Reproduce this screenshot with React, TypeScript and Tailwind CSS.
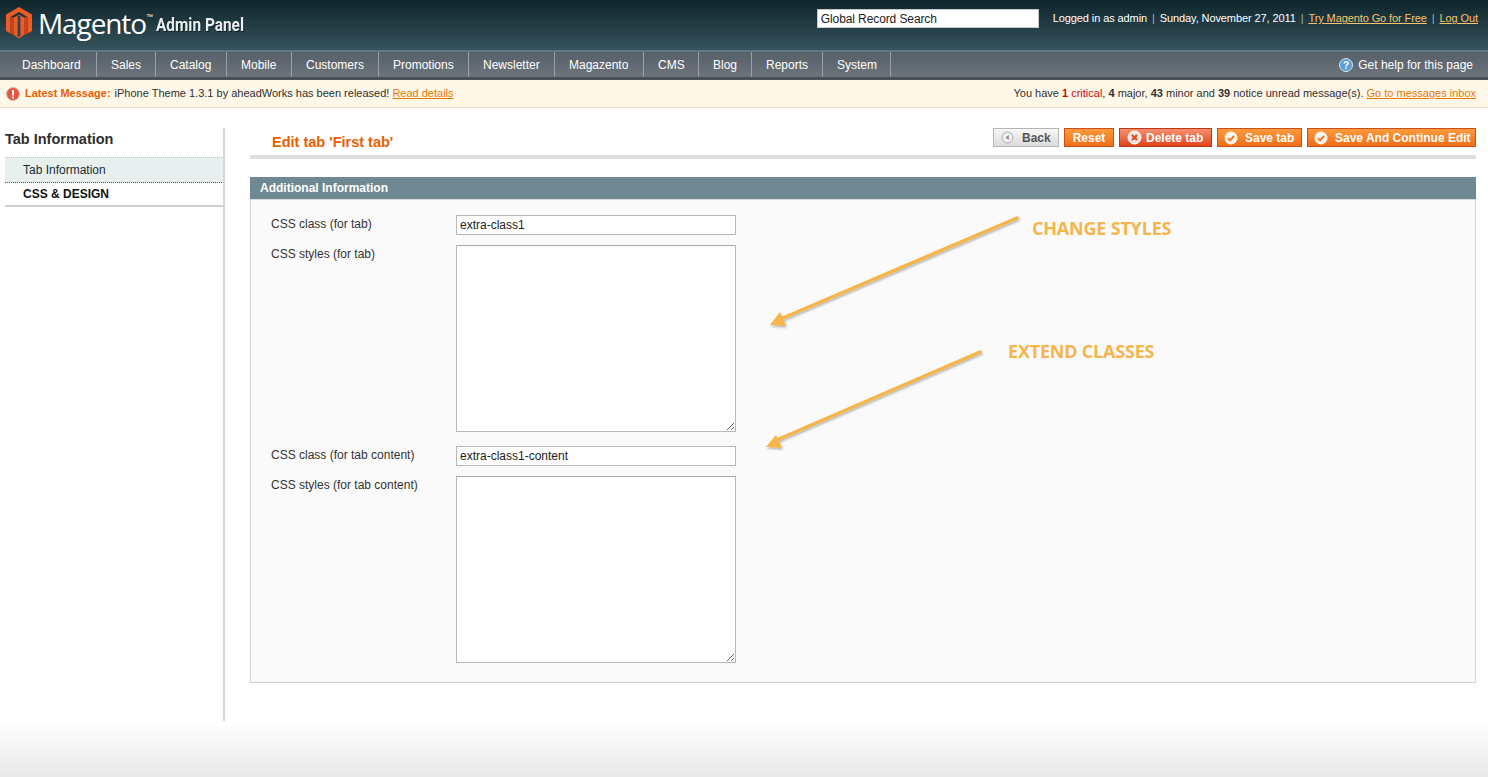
import React from "react";

const navItems: [string, string][] = [
  ["Dashboard", "w-[97px] pl-[22px]"],
  ["Sales", "w-[59px] pl-[14px]"],
  ["Catalog", "w-[71px] pl-[14px]"],
  ["Mobile", "w-[65px] pl-[14px]"],
  ["Customers", "w-[87px] pl-[14px]"],
  ["Promotions", "w-[90px] pl-[14px]"],
  ["Newsletter", "w-[86px] pl-[14px]"],
  ["Magazento", "w-[89px] pl-[14px]"],
  ["CMS", "w-[55px] pl-[14px]"],
  ["Blog", "w-[53px] pl-[14px]"],
  ["Reports", "w-[71px] pl-[14px]"],
  ["System", "w-[68px] pl-[14px]"],
];

function Logo() {
  return (
    <svg width="28" height="32" viewBox="0 0 28 32" className="shrink-0">
      <path d="M14 0 L27 7.5 V24 L22.5 26.5 V10 L14 5 L5.5 10 V26.5 L1 24 V7.5 Z" fill="#ee5b25" />
      <path d="M14 7.5 L19 10.5 V28 L14 31.5 L9 28 V10.5 Z" fill="#ee5b25" />
      <path d="M12.6 9 V29 L14 30 L15.4 29 V9 L14 8.2 Z" fill="#2b4650" />
      <path d="M5.5 10 L9 10.5 V28 L5.5 26.5 Z" fill="#c8441a" />
      <path d="M22.5 10 L19 10.5 V28 L22.5 26.5 Z" fill="#c8441a" />
    </svg>
  );
}

function CheckIcon() {
  return (
    <svg width="14" height="14" viewBox="0 0 14 14" className="shrink-0">
      <circle cx="7" cy="7" r="6.5" fill="#fff" fillOpacity="0.92" />
      <path d="M4 7.2 L6.2 9.4 L10 5" fill="none" stroke="#f27a1f" strokeWidth="2" />
    </svg>
  );
}

function OrangeButton({ children, className }: { children: React.ReactNode; className: string }) {
  return (
    <button className={"h-[19px] flex items-center border border-[#c9501a] bg-gradient-to-b from-[#fb9a3c] to-[#f26d12] text-white font-bold text-[12px] leading-none " + className}>
      {children}
    </button>
  );
}

function Field({ label, value, area }: { label: string; value?: string; area?: boolean }) {
  return (
    <div className="flex items-start">
      <label className="w-[205px] pt-[2px] pl-[20px] text-[12px] leading-[15px] text-[#333]">{label}</label>
      {area ? (
        <textarea readOnly className="w-[280px] h-[187px] block bg-white border border-[#b8b8b8] border-t-[#aaa]" />
      ) : (
        <input readOnly value={value} className="w-[280px] h-[20px] block bg-white border border-[#b8b8b8] px-[3px] text-[12px] text-[#222] outline-none" />
      )}
    </div>
  );
}

export default function App() {
  return (
    <div className="relative h-[777px] w-[1488px] overflow-hidden bg-white font-['Liberation_Sans',Arial,sans-serif] text-[12px] text-[#2f2f2f]">
      {/* Header */}
      <header className="h-[52px] flex items-start bg-gradient-to-b from-[#0f252c] to-[#36545e] border-b-2 border-b-[#5d7a85]">
        <div className="flex items-center pl-[5px] pt-[7px]">
          <Logo />
          <span className="ml-[5px] font-['Open_Sans',sans-serif] text-[28px] leading-[32px] tracking-[-1.1px] text-white">Magento</span>
          <span className="text-white text-[7px] self-start mt-[6px] leading-none">™</span>
          <span className="ml-[3px] mt-[3px] font-['Roboto',sans-serif] font-bold text-[17.5px] leading-[24px] text-[#e9eef0] [text-shadow:1px_1px_0_#0c1c22] origin-left scale-x-[0.88] inline-block whitespace-nowrap">Admin Panel</span>
        </div>
        <div className="ml-auto flex items-center pt-[9px] pr-[10px] text-[11px] tracking-[-0.1px] text-white">
          <input readOnly value="Global Record Search" className="w-[222px] h-[19px] mr-[14px] bg-white border border-[#c9c9c9] px-[3px] text-[12px] text-[#222] outline-none" />
          <span className="font-bold [-webkit-text-stroke:0] font-normal">Logged in as admin</span>
          <span className="mx-[5px] text-[#9fb2b9]">|</span>
          <span>Sunday, November 27, 2011</span>
          <span className="mx-[5px] text-[#9fb2b9]">|</span>
          <a className="underline text-[#f7c36f]">Try Magento Go for Free</a>
          <span className="mx-[5px] text-[#9fb2b9]">|</span>
          <a className="underline text-[#f7c36f]">Log Out</a>
        </div>
      </header>

      {/* Nav */}
      <nav className="h-[28px] flex bg-gradient-to-b from-[#566069] to-[#6c747b] border-b-[3px] border-b-[#4a5056] box-content-none">
        {navItems.map(([name, cls]) => (
          <div key={name} className={"h-[25px] flex items-center border-r border-r-[#9aa1a6] text-white text-[12px] " + cls}>
            {name}
          </div>
        ))}
        <div className="ml-auto pr-[15px] flex items-center text-white text-[12px]">
          <svg width="14" height="14" viewBox="0 0 14 14" className="mr-[5px]">
            <circle cx="7" cy="7" r="6.5" fill="#5c9fd8" stroke="#d3e6f5" />
            <text x="7" y="10.5" textAnchor="middle" fontSize="10" fontWeight="bold" fill="#fff" fontFamily="Liberation Sans">?</text>
          </svg>
          Get help for this page
        </div>
      </nav>

      {/* Notice */}
      <div className="h-[28px] flex items-center bg-[#fff8e9] border-b border-b-[#ecdfc4] pl-[6px] pr-[12px] text-[11px] text-[#2f2f2f]">
        <svg width="14" height="14" viewBox="0 0 14 14" className="mr-[5px]">
          <circle cx="7" cy="7" r="6.5" fill="#e9543f" stroke="#c9c0b0" />
          <rect x="6" y="3" width="2" height="5.5" fill="#fff" />
          <rect x="6" y="9.5" width="2" height="2" fill="#fff" />
        </svg>
        <b className="text-[#eb5e00]">Latest Message:</b>
        <span className="ml-[4px]">iPhone Theme 1.3.1 by aheadWorks has been released!</span>
        <a className="ml-[3px] underline text-[#ea7601]">Read details</a>
        <span className="ml-auto">
          You have <b className="text-[#d40707]">1</b> <span className="text-[#d40707]">critical</span>, <b>4</b> major, <b>43</b> minor and <b>39</b> notice unread message(s).{" "}
          <a className="underline text-[#ea7601]">Go to messages inbox</a>
        </span>
      </div>

      {/* Main */}
      <main className="flex pt-[20px] h-[613px]">
        <aside className="ml-[5px] w-[220px] h-[593px] border-r-2 border-r-[#d6d6d6] shrink-0">
          <h3 className="h-[24px] text-[14.5px] font-bold leading-[22px] text-[#2f2f2f]">Tab Information</h3>
          <div className="mr-[-1px] h-[26px] flex items-center pl-[18px] mt-[5px] bg-[#e7efef] border-t border-t-[#bfbfbf] border-b border-dotted border-b-[#555] border-r border-r-[#bcc8c8] text-[12px] text-[#1c2b33]">
            Tab Information
          </div>
          <div className="mr-[-1px] h-[24px] flex items-center pl-[18px] border-b-2 border-b-[#cfcfcf] text-[12px] font-bold text-[#111]">
            CSS &amp; DESIGN
          </div>
        </aside>

        <section className="ml-[25px] w-[1226px] shrink-0">
          <div className="h-[27px] flex items-start justify-between border-b-4 border-b-[#dedede] box-content pb-0">
            <h3 className="pl-[22px] pt-[5px] text-[14.5px] leading-[18px] font-bold text-[#eb5e00]">Edit tab 'First tab'</h3>
            <div className="flex gap-[5px] text-[12px]">
              <button className="w-[66px] h-[19px] flex items-center pl-[7px] border border-[#b5b5b5] bg-gradient-to-b from-[#f7f7f7] to-[#dcdcdc] font-bold text-[#555] text-[12px] leading-none">
                <svg width="13" height="13" viewBox="0 0 13 13" className="mr-[8px]">
                  <circle cx="6.5" cy="6.5" r="5.5" fill="#eee" stroke="#aaa" />
                  <path d="M7.8 4 L4.6 6.5 L7.8 9 Z" fill="#888" />
                </svg>
                Back
              </button>
              <OrangeButton className="w-[50px] justify-center">Reset</OrangeButton>
              <button className="w-[93px] h-[19px] flex items-center pl-[7px] border border-[#b93a14] bg-gradient-to-b from-[#f68e6d] to-[#e2410f] text-white font-bold text-[12px] leading-none">
                <svg width="15" height="15" viewBox="0 0 15 15" className="mr-[4px] shrink-0">
                  <circle cx="7.5" cy="7.5" r="6.5" fill="#f4e5e0" stroke="#fff" />
                  <path d="M5 5 L10 10 M10 5 L5 10" stroke="#e2481c" strokeWidth="2.2" />
                </svg>
                Delete tab
              </button>
              <OrangeButton className="w-[85px] pl-[6px]"><CheckIcon /><span className="ml-[7px]">Save tab</span></OrangeButton>
              <OrangeButton className="w-[169px] pl-[6px]"><CheckIcon /><span className="ml-[7px]">Save And Continue Edit</span></OrangeButton>
            </div>
          </div>

          <div className="mt-[18px] h-[22px] flex items-center pl-[10px] bg-[#6f8992] text-white font-bold text-[12px]">
            Additional Information
          </div>
          <div className="h-[484px] bg-[#fafafa] border border-[#d0d0d0] border-t-[#d6dcde] pt-[15px] flex flex-col gap-[10px]">
            <Field label="CSS class (for tab)" value="extra-class1" />
            <Field label="CSS styles (for tab)" area />
            <div className="mt-[4px]"><Field label="CSS class (for tab content)" value="extra-class1-content" /></div>
            <Field label="CSS styles (for tab content)" area />
          </div>
        </section>
      </main>

      {/* Footer fade */}
      <div className="absolute left-0 right-0 bottom-0 h-[55px] bg-gradient-to-b from-white to-[#e8e8e8]" />

      {/* Annotations */}
      <svg className="absolute left-0 top-0 pointer-events-none" width="1488" height="777">
        <defs>
          <filter id="sh" x="-10%" y="-10%" width="120%" height="120%">
            <feDropShadow dx="1" dy="1.5" stdDeviation="1" floodColor="#000" floodOpacity="0.3" />
          </filter>
        </defs>
        <g filter="url(#sh)" fill="#f6b54a" stroke="none">
          <path d="M1017 218 L783 318" stroke="#f6b54a" strokeWidth="3.5" strokeLinecap="round" />
          <path d="M770 325 L780 312 L786 326 Z" />
          <path d="M980 352 L779 439" stroke="#f6b54a" strokeWidth="3.5" strokeLinecap="round" />
          <path d="M766 447 L776 435 L782 448 Z" />
        </g>
      </svg>
      <div className="absolute left-[1032px] top-[218px] text-[18px] leading-[21px] font-bold text-[#f6b54a] font-['Open_Sans',sans-serif] tracking-[-0.2px]">CHANGE STYLES</div>
      <div className="absolute left-[1008px] top-[341px] text-[18px] leading-[21px] font-bold text-[#f6b54a] font-['Open_Sans',sans-serif] tracking-[-0.2px]">EXTEND CLASSES</div>
    </div>
  );
}
